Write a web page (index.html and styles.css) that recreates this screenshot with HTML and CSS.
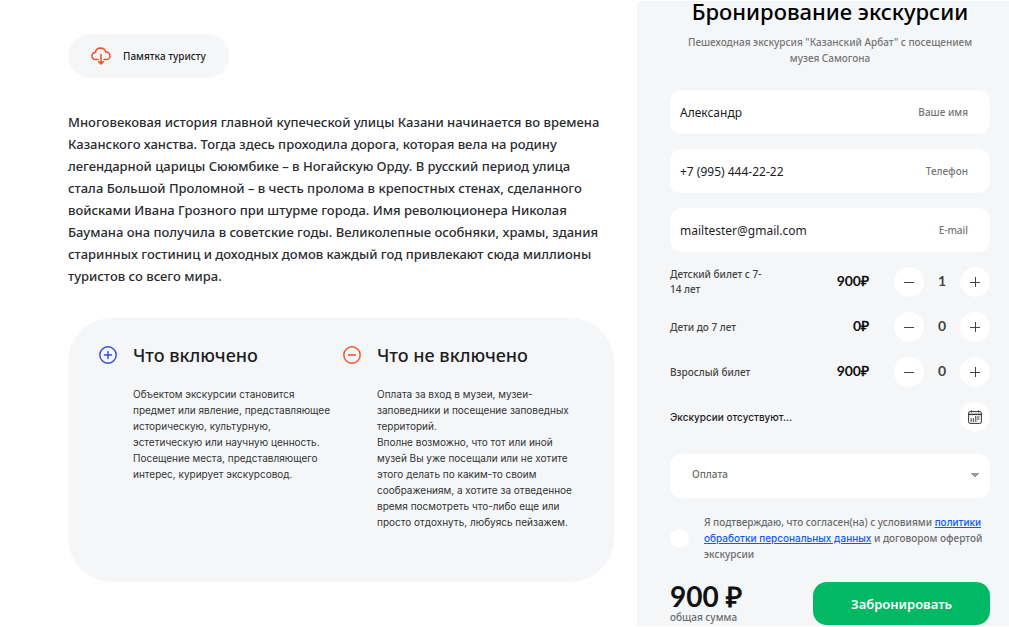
FILE: index.html
```html
<!DOCTYPE html>
<html lang="ru">
<head>
    <meta charset="UTF-8">
    <meta name="viewport" content="width=device-width, initial-scale=1.0">
    <title>Бронирование экскурсии</title>
    <link rel="stylesheet" href="styles.css">
</head>
<body>

<div class="page">
    <main class="content">
        <a class="memo" href="#memo">
            <svg class="memo-icon" viewBox="0 0 20 18" fill="none" stroke="#fc4c23" stroke-width="1.5" stroke-linecap="round" stroke-linejoin="round">
                <path d="M7 12.5H4.6A3.7 3.7 0 0 1 1 8.9a3.5 3.5 0 0 1 3.3-3.5A5.5 5.5 0 0 1 9.6 1a5.4 5.4 0 0 1 5.2 4.1 3.8 3.8 0 0 1 4.2 3.8 3.6 3.6 0 0 1-3.6 3.6H13"/>
                <path d="M10 7.5v9M7.6 14.6l2.4 2.4 2.4-2.4"/>
            </svg>
            Памятка туристу
        </a>

        <p class="about">Многовековая история главной купеческой улицы Казани начинается во времена Казанского ханства. Тогда здесь проходила дорога, которая вела на родину легендарной царицы Сююмбике – в Ногайскую Орду. В русский период улица стала Большой Проломной – в честь пролома в крепостных стенах, сделанного войсками Ивана Грозного при штурме города. Имя революционера Николая Баумана она получила в советские годы. Великолепные особняки, храмы, здания старинных гостиниц и доходных домов каждый год привлекают сюда миллионы туристов со всего мира.</p>

        <section class="included">
            <div class="included-item">
                <svg class="included-icon" viewBox="0 0 18 18" fill="none" stroke="#2f49e6" stroke-width="1.4" stroke-linecap="round">
                    <circle cx="9" cy="9" r="8.2"/>
                    <path d="M9 5.5v7M5.5 9h7"/>
                </svg>
                <div>
                    <h2>Что включено</h2>
                    <p>Объектом экскурсии становится предмет или явление, представляющее историческую, культурную, эстетическую или научную ценность. Посещение места, представляющего интерес, курирует экскурсовод.</p>
                </div>
            </div>
            <div class="included-item">
                <svg class="included-icon" viewBox="0 0 18 18" fill="none" stroke="#fc4c23" stroke-width="1.4" stroke-linecap="round">
                    <circle cx="9" cy="9" r="8.2"/>
                    <path d="M5.5 9h7"/>
                </svg>
                <div>
                    <h2>Что не включено</h2>
                    <p>Оплата за вход в музеи, музеи-заповедники и посещение заповедных территорий.<br>Вполне возможно, что тот или иной музей Вы уже посещали или не хотите этого делать по каким-то своим соображениям, а хотите за отведенное время посмотреть что-либо еще или просто отдохнуть, любуясь пейзажем.</p>
                </div>
            </div>
        </section>
    </main>

    <aside class="booking">
        <h1>Бронирование экскурсии</h1>
        <p class="subtitle">Пешеходная экскурсия "Казанский Арбат" с посещением музея Самогона</p>

        <form id="bookingForm">
            <div class="field">
                <input type="text" id="name" value="Александр">
                <label for="name">Ваше имя</label>
            </div>
            <div class="field">
                <input type="tel" id="phone" value="+7 (995) 444-22-22">
                <label for="phone">Телефон</label>
            </div>
            <div class="field">
                <input type="email" id="email" value="mailtester@gmail.com">
                <label for="email">E-mail</label>
            </div>

            <div class="tickets">
                <div class="ticket">
                    <span class="ticket-name">Детский билет с 7-14 лет</span>
                    <span class="price">900₽</span>
                    <button type="button" class="round minus" aria-label="Меньше"></button>
                    <output class="count">1</output>
                    <button type="button" class="round plus" aria-label="Больше"></button>
                </div>
                <div class="ticket">
                    <span class="ticket-name">Дети до 7 лет</span>
                    <span class="price">0₽</span>
                    <button type="button" class="round minus" aria-label="Меньше"></button>
                    <output class="count">0</output>
                    <button type="button" class="round plus" aria-label="Больше"></button>
                </div>
                <div class="ticket">
                    <span class="ticket-name">Взрослый билет</span>
                    <span class="price">900₽</span>
                    <button type="button" class="round minus" aria-label="Меньше"></button>
                    <output class="count">0</output>
                    <button type="button" class="round plus" aria-label="Больше"></button>
                </div>
                <div class="date">
                    <span>Экскурсии отсуствуют...</span>
                    <button type="button" class="round" aria-label="Выбрать дату">
                        <svg class="calendar" viewBox="0 0 14 14" fill="none" stroke="#333">
                            <rect x="0.6" y="1.6" width="12.8" height="11.8" rx="1.5"/>
                            <path d="M0.6 4.4h12.8" stroke-width="1.4"/>
                            <path d="M3.5 0.4v2M10.5 0.4v2"/>
                            <path d="M7 7h5M2.5 9h9.5M2.5 11h7" stroke-width="1.3" stroke-dasharray="1.3 1"/>
                        </svg>
                    </button>
                </div>
            </div>

            <select class="payment" aria-label="Оплата">
                <option>Оплата</option>
            </select>

            <div class="agree">
                <input type="checkbox" id="agree">
                <label for="agree">Я подтверждаю, что согласен(на) с условиями <a href="#policy">политики обработки персональных данных</a> и договором офертой экскурсии</label>
            </div>

            <div class="total">
                <div>
                    <div class="sum">900 ₽</div>
                    <div class="sum-label">общая сумма</div>
                </div>
                <button type="submit" class="submit">Забронировать</button>
            </div>
        </form>
    </aside>
</div>

<div class="bottom-bar"></div>

</body>
</html>
```
FILE: styles.css
```css
* {
    box-sizing: border-box;
}
body {
    margin: 0;
    background: #fff;
    color: #1d1d1f;
    font-family: "Noto Sans", sans-serif;
    font-size: 10px;
    font-weight: 500;
}
h1, h2, p {
    margin: 0;
    font-weight: 500;
}
button, input, select {
    font-family: inherit;
    font-weight: inherit;
    border: none;
}
.page {
    display: grid;
    grid-template-columns: minmax(0, 1fr) 372px;
    gap: 23px;
    padding: 1px 0 1px 68px;
}

/* Left column */
.content {
    padding-top: 33px;
}
.memo {
    display: inline-flex;
    align-items: center;
    gap: 12px;
    height: 44px;
    padding: 0 23px;
    border-radius: 22px;
    background: #f5f6f8;
    color: #1d1d1f;
    text-decoration: none;
}
.memo-icon {
    width: 20px;
    height: 18px;
}
.about {
    margin-top: 33px;
    padding-right: 8px;
    color: #2a2c30;
    font-size: 13px;
    line-height: 22px;
}
.included {
    display: grid;
    grid-template-columns: 1fr 1fr;
    gap: 4px;
    min-height: 264px;
    margin-top: 31px;
    padding: 25px 31px;
    border-radius: 44px;
    background: #f5f6f8;
}
.included-item {
    display: flex;
    align-items: flex-start;
    gap: 16px;
}
.included-icon {
    flex: none;
    width: 18px;
    height: 18px;
    margin-top: 3px;
}
.included h2 {
    font-size: 18px;
    line-height: 24px;
}
.included p {
    margin-top: 19px;
    color: #333;
    font-family: Inter, sans-serif;
    font-weight: 400;
    line-height: 16px;
}

/* Booking form */
.booking {
    padding: 0 19px 1px 33px;
    background: #f5f6f8;
}
.booking h1 {
    color: #000;
    font-size: 22px;
    line-height: 20px;
    text-align: center;
}
.subtitle {
    margin-top: 13px;
    padding: 0 12px;
    color: #757575;
    line-height: 16px;
    text-align: center;
}
.field {
    display: flex;
    align-items: center;
    height: 44px;
    margin-bottom: 15px;
    padding: 0 22px 0 10px;
    border-radius: 12px;
    background: #fff;
}
#bookingForm {
    margin-top: 24px;
}
.field input {
    flex: 1;
    min-width: 0;
    padding: 0;
    outline: none;
    background: transparent;
    color: #1d1d1f;
    font-size: 12px;
    font-weight: 400;
}
.field label {
    color: #757575;
}
.tickets {
    display: grid;
    gap: 15px;
}
.ticket {
    display: grid;
    grid-template-columns: 100px 1fr 30px 36px 30px;
    align-items: center;
    height: 30px;
}
.ticket-name {
    color: #444;
    line-height: 15px;
}
.price {
    padding: 0 25px 4px 0;
    color: #111;
    font-family: Lato, sans-serif;
    font-size: 14px;
    font-weight: 700;
    text-align: right;
}
.count {
    padding-bottom: 4px;
    color: #444;
    font-family: Lato, sans-serif;
    font-size: 14px;
    font-weight: 700;
    text-align: center;
}
.round {
    display: grid;
    place-items: center;
    width: 30px;
    height: 30px;
    padding: 0;
    border-radius: 50%;
    background: #fff;
    cursor: pointer;
}
/* Signs are drawn as 1px lines crossing in the same grid cell */
.round::before,
.plus::after {
    grid-area: 1 / 1;
    background: #444;
}
.minus::before,
.plus::before {
    content: "";
    width: 10px;
    height: 1px;
}
.plus::after {
    content: "";
    width: 1px;
    height: 10px;
}
.calendar {
    width: 14px;
    height: 14px;
}
.date {
    display: flex;
    justify-content: space-between;
    align-items: center;
    font-family: Inter, sans-serif;
}
.payment {
    display: block;
    width: 100%;
    height: 44px;
    margin-top: 22px;
    padding: 0 22px 4px;
    border-radius: 12px;
    appearance: none;
    /* Arrow: two mirrored halves of a triangle */
    background:
        linear-gradient(45deg, transparent 50%, #999 50%) no-repeat right 15px top 19px / 4px 4px,
        linear-gradient(-45deg, transparent 50%, #999 50%) no-repeat right 11px top 19px / 4px 4px,
        #fff;
    color: #6b6b6b;
    font-size: 10px;
}
.agree {
    display: flex;
    align-items: center;
    gap: 15px;
    margin-top: 16px;
    color: #6b6b6b;
    line-height: 16px;
}
.agree input {
    flex: none;
    width: 19px;
    height: 19px;
    margin: 0;
    border-radius: 50%;
    appearance: none;
    background: #fff;
}
.agree a {
    color: #1557ff;
    font-family: Inter, sans-serif;
}
.total {
    display: flex;
    justify-content: space-between;
    margin-top: 20px;
}
.sum {
    color: #111;
    font-family: Lato, sans-serif;
    font-size: 28px;
    font-weight: 700;
    line-height: 28px;
}
.sum-label {
    color: #6b6b6b;
    line-height: 15px;
}
.submit {
    width: 177px;
    height: 43px;
    border-radius: 14px;
    background: #00b962;
    color: #fff;
    font-size: 13px;
    font-weight: 600;
    cursor: pointer;
}

/* Edge of the bar under the page, only its shadow shows */
.bottom-bar {
    position: fixed;
    right: 0;
    bottom: 0;
    left: 54px;
    height: 1px;
    background: #fff;
    box-shadow: 0 0 14px rgba(0, 0, 0, 0.05);
}
```
